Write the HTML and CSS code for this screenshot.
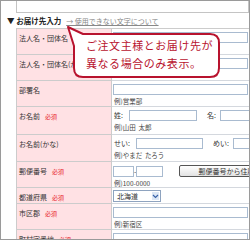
FILE: index.html
```html
<!DOCTYPE html>
<html lang="ja">
<head>
    <meta charset="UTF-8">
    <meta name="viewport" content="width=device-width, initial-scale=1.0">
    <title>お届け先入力</title>
    <link rel="stylesheet" href="styles.css">
</head>
<body>
<div class="frame">
    <!-- previous block, cut off at the top -->
    <div class="prev-row"></div>

    <h2 class="section-head">▼ お届け先入力<a href="#" class="note-link">→ 使用できない文字について</a></h2>

    <table class="entry">
        <tr>
            <th>法人名・団体名</th>
            <td><input type="text" class="field wide"></td>
        </tr>
        <tr>
            <th>法人名・団体名(かな)</th>
            <td><input type="text" class="field wide"></td>
        </tr>
        <tr>
            <th>部署名</th>
            <td>
                <input type="text" class="field wide">
                <div class="ex">例)営業部</div>
            </td>
        </tr>
        <tr class="tall">
            <th>お名前<span class="req">必須</span></th>
            <td>
                <div class="line">
                    <span class="tag">姓:</span>
                    <input type="text" class="field sei">
                    <span class="tag mei-tag">名:</span>
                    <input type="text" class="field mei">
                </div>
                <div class="ex">例)山田&nbsp;&nbsp;太郎</div>
            </td>
        </tr>
        <tr class="mid">
            <th>お名前(かな)</th>
            <td>
                <div class="line">
                    <span class="tag">せい:</span>
                    <input type="text" class="field sei-kana">
                    <span class="tag mei-tag">めい:</span>
                    <input type="text" class="field mei-kana">
                </div>
                <div class="ex">例)やまだ&nbsp;&nbsp;たろう</div>
            </td>
        </tr>
        <tr>
            <th>郵便番号<span class="req">必須</span></th>
            <td>
                <div class="line">
                    <input type="text" class="field zip1">
                    <span class="dash">-</span>
                    <input type="text" class="field zip2">
                    <button type="button" class="zip-btn">郵便番号から住所を入力</button>
                </div>
                <div class="ex">例)100-0000</div>
            </td>
        </tr>
        <tr class="short">
            <th>都道府県<span class="req">必須</span></th>
            <td>
                <div class="select">
                    <span class="select-text">北海道</span>
                    <span class="select-btn">
                        <svg width="7" height="5" viewBox="0 0 7 5"><path d="M1 1 L3.5 3.5 L6 1" fill="none" stroke="#3b63a8" stroke-width="1.2"/></svg>
                    </span>
                </div>
            </td>
        </tr>
        <tr>
            <th>市区郡<span class="req">必須</span></th>
            <td>
                <input type="text" class="field wide">
                <div class="ex">例)新宿区</div>
            </td>
        </tr>
        <tr>
            <th>町村字番地<span class="req">必須</span></th>
            <td><input type="text" class="field wide"></td>
        </tr>
    </table>

    <!-- balloon note over the form -->
    <div class="balloon">
        <svg class="balloon-shape" width="156" height="56" viewBox="0 0 156 56">
            <path d="M17 9 L144 9 Q153 9 153 18 L153 43 Q153 52 144 52 L17 52 Q8 52 8 43 L8 21 L2 2 Z" fill="#fff" stroke="#b8132e" stroke-width="2" stroke-linejoin="round"/>
        </svg>
        <p class="balloon-text">ご注文主様とお届け先が<br>異なる場合のみ表示。</p>
    </div>
</div>
</body>
</html>
```

FILE: styles.css
```css
* {
    box-sizing: border-box;
}

body {
    margin: 0;
    background: #fff;
    font-family: "Noto Sans CJK JP", sans-serif;
    color: #333;
}

.frame {
    position: relative;
    width: 250px;
    height: 240px;
    border: 1px solid #9a9a9a;
    overflow: hidden;
}

.prev-row {
    height: 12px;
    margin-left: 15px;
    border: 1px solid #c4c4c4;
    border-top: 0;
}

.section-head {
    margin: 0;
    height: 15px;
    padding-left: 6px;
    font-size: 7.5px;
    line-height: 15px;
    font-weight: bold;
    color: #222;
    white-space: nowrap;
}

.note-link {
    margin-left: 5px;
    font-size: 7px;
    font-weight: normal;
    color: #888;
}

/* form table */
.entry {
    margin-left: 15px;
    width: 233px;
    table-layout: fixed;
    border-collapse: separate;
    border-spacing: 0;
    border-top: 1px solid #ccc;
    border-left: 1px solid #ccc;
}

.entry th {
    width: 95px;
    height: 26px;
    padding: 4px 0 0 2px;
    border-right: 1px solid #ccc;
    border-bottom: 1px solid #ccc;
    background: #ffe1e4;
    font-size: 7px;
    line-height: 10px;
    font-weight: normal;
    text-align: left;
    vertical-align: top;
    white-space: nowrap;
    overflow: hidden;
    color: #333;
}

.entry td {
    padding: 3px 0 0 1px;
    border-bottom: 1px solid #d4d8de;
    vertical-align: top;
    white-space: nowrap;
    overflow: hidden;
    font-size: 7px;
}

.entry tr.tall th { height: 28px; }
.entry tr.mid th { height: 27px; }
.entry tr.short th { height: 16px; }
.entry tr.short td { padding-top: 2px; }

.req {
    margin-left: 5px;
    font-size: 6px;
    color: #e8202a;
}

.field {
    display: block;
    height: 11px;
    margin: 0;
    padding: 0;
    border: 1px solid #a9bbd0;
    background: #fff;
}

.wide { width: 135px; }
.sei { width: 68px; margin-left: 6px; }
.mei { width: 40px; margin-left: 4px; }
.sei-kana { width: 67px; margin-left: 6px; }
.mei-kana { width: 30px; margin-left: 4px; }
.zip1 { width: 21px; }
.zip2 { width: 27px; }

.line {
    display: flex;
    align-items: center;
}

.tag {
    padding-left: 1px;
    font-size: 7px;
    line-height: 11px;
}

.mei-tag {
    margin-left: 9px;
}

.dash {
    width: 9px;
    text-align: center;
    font-size: 7px;
}

.zip-btn {
    margin-left: 16px;
    height: 12px;
    padding: 0 6px 0 18px;
    border: 1px solid #555;
    border-radius: 2px;
    background: linear-gradient(#fff, #e2e2e2);
    font-family: inherit;
    font-size: 7px;
    line-height: 10px;
    color: #333;
}

.ex {
    margin-top: 2px;
    padding-left: 1px;
    font-size: 6.5px;
    line-height: 8px;
    color: #444;
}

.select {
    display: flex;
    width: 48px;
    height: 12px;
    border: 1px solid #8ea3bf;
    background: #fff;
}

.select-text {
    flex: 1;
    padding-left: 3px;
    font-size: 7px;
    line-height: 10px;
}

.select-btn {
    display: flex;
    align-items: center;
    justify-content: center;
    width: 9px;
    background: #dce7f5;
    border: 1px solid #fff;
}

/* balloon */
.balloon {
    position: absolute;
    left: 65px;
    top: 24px;
    width: 156px;
    height: 56px;
}

.balloon-shape {
    display: block;
}

.balloon-text {
    position: absolute;
    left: 20px;
    top: 11px;
    margin: 0;
    font-size: 11px;
    line-height: 18px;
    letter-spacing: 0.55px;
    color: #b8132e;
    white-space: nowrap;
}
```
